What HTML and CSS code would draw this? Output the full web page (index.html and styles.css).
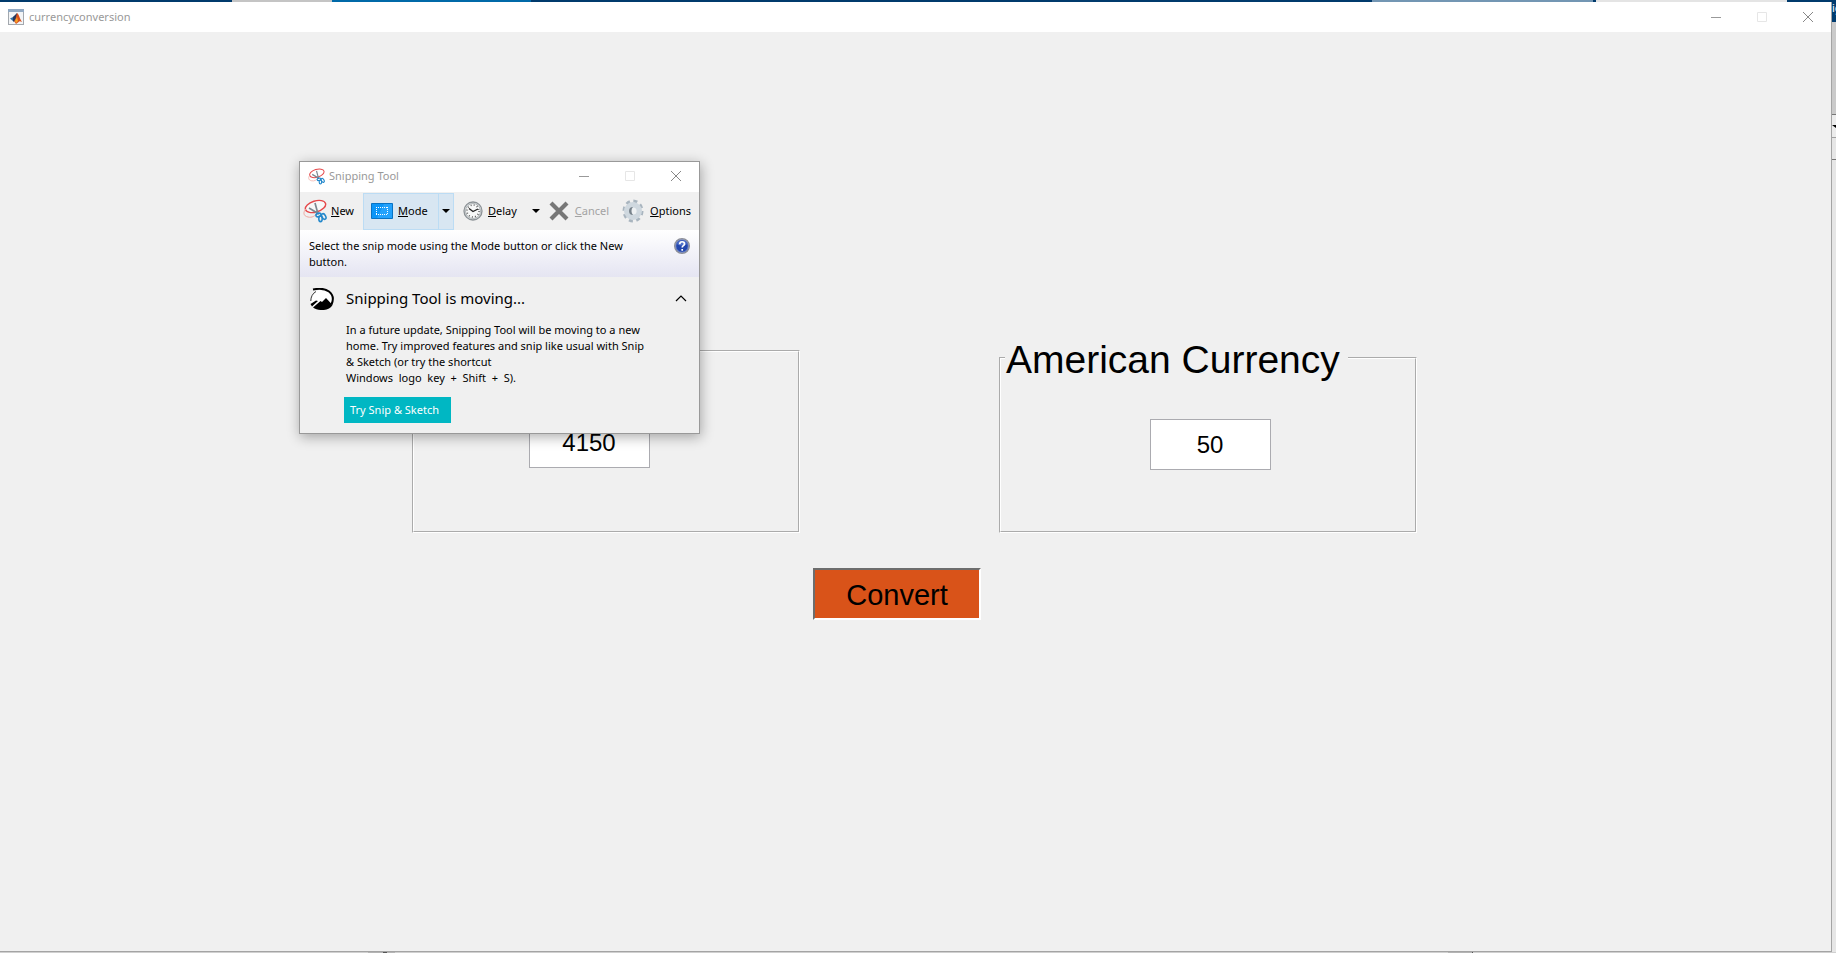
FILE: index.html
```html
<!DOCTYPE html>
<html lang="en">
<head>
<meta charset="utf-8">
<title>currencyconversion</title>
<link rel="stylesheet" href="styles.css">
</head>
<body>
<div class="desktop">
  <div class="strip-top">
    <i class="seg navy" style="flex:232"></i>
    <i class="seg grey" style="flex:100"></i>
    <i class="seg blue" style="flex:199"></i>
    <i class="seg navy" style="flex:841"></i>
    <i class="seg steel" style="flex:221"></i>
    <i class="seg navy" style="flex:3"></i>
    <i class="seg light" style="flex:191"></i>
    <i class="seg navy" style="flex:49"></i>
  </div>

  <main class="figure">
    <header class="titlebar">
      <svg class="app-icon" viewBox="0 0 16 16" aria-hidden="true">
        <rect x=".5" y=".5" width="15" height="15" fill="#f2f4f6" stroke="#a3a8ae"/>
        <path d="M0 0h16v3H0z" fill="#91a9c3"/>
        <path d="M2 9.500l4-2 2 2-2.500 3z" fill="#2f6fa5"/>
        <path d="M5 8l4-4v4l-3 5-1-1z" fill="#25375c"/>
        <path d="M9 4c2 1 2 4 5 9-3-2-3 0-6 2l-2-3c2-1 2-5 3-8z" fill="#d8501c"/>
        <path d="M9 8l1 4-2 2-1-2z" fill="#f5a326"/>
      </svg>
      <h1 class="title">currencyconversion</h1>
      <div class="window-buttons">
        <button class="win-btn" aria-label="Minimize"><svg viewBox="0 0 10 10"><path d="M0 5.5h10" stroke="#999"/></svg></button>
        <button class="win-btn" aria-label="Maximize" disabled><svg viewBox="0 0 10 10"><path d="M.5.5h9v9h-9z" stroke="#e6e6e6"/></svg></button>
        <button class="win-btn" aria-label="Close"><svg viewBox="0 0 10 10"><path d="M0 0l10 10M10 0L0 10" stroke="#888"/></svg></button>
      </div>
    </header>

    <form class="converter">
      <div class="panels">
        <fieldset class="panel panel-source" aria-label="Source currency">
          <input class="amount" aria-label="Source amount" value="4150">
        </fieldset>
        <fieldset class="panel panel-target">
          <legend>American Currency</legend>
          <input class="amount" aria-label="American amount" value="50">
        </fieldset>
      </div>
      <div class="actions">
        <button type="button" class="convert">Convert</button>
      </div>
    </form>
  </main>

  <div class="strip-right">
    <span class="peek-title">ig</span>
    <i class="peek-pane"></i>
    <i class="peek-combo"><svg viewBox="0 0 4 4"><path d="M0 0h4v3z" fill="#000"/></svg></i>
    <i class="peek-row"></i>
  </div>

  <div class="strip-bottom">
    <i style="flex:368"></i><i class="thumb" style="flex:15"></i><i class="mark" style="flex:4"></i><i class="thumb" style="flex:8"></i><i style="flex:1053"></i><i class="thumb" style="flex:24"></i><i class="mark" style="flex:1"></i><i style="flex:363"></i>
  </div>
</div>

<section class="snip" aria-label="Snipping Tool">
  <svg width="0" height="0" class="defs" aria-hidden="true">
    <symbol id="scissors" viewBox="0 0 24 24">
      <ellipse cx="12.500" cy="7.500" rx="10.500" ry="5.500" transform="rotate(-17 12.500 7.500)" fill="#fff" fill-opacity=".5" stroke="#e5484a" stroke-width="1.400"/>
      <path d="M3 10c-3 3-3 7 2 8 4 1 7-1 9-4" fill="none" stroke="#efa9a2" stroke-width="1"/>
      <path d="M12 4l3 11M6 9l10 6" stroke="#7d8790" stroke-width="1.700"/>
      <ellipse cx="15.500" cy="16" rx="2.600" ry="1.700" transform="rotate(-15 15.500 16)" fill="none" stroke="#2488cb" stroke-width="1.600"/>
      <ellipse cx="17.500" cy="19.800" rx="1.700" ry="2.800" fill="none" stroke="#2488cb" stroke-width="1.600"/>
      <ellipse cx="20.800" cy="17.500" rx="1.800" ry="3" transform="rotate(-30 20.800 17.500)" fill="none" stroke="#2488cb" stroke-width="1.600"/>
    </symbol>
  </svg>
  <header class="titlebar snip-titlebar">
    <svg class="snip-icon"><use href="#scissors"/></svg>
    <h2 class="title">Snipping Tool</h2>
    <div class="window-buttons">
      <button class="win-btn" aria-label="Minimize"><svg viewBox="0 0 10 10"><path d="M0 5.5h10" stroke="#999"/></svg></button>
      <button class="win-btn" aria-label="Maximize" disabled><svg viewBox="0 0 10 10"><path d="M.5.5h9v9h-9z" stroke="#e6e6e6"/></svg></button>
      <button class="win-btn" aria-label="Close"><svg viewBox="0 0 10 10"><path d="M0 0l10 10M10 0L0 10" stroke="#888"/></svg></button>
    </div>
  </header>

  <nav class="toolbar">
    <button class="tool tool-new"><svg class="icon"><use href="#scissors"/></svg><span><u>N</u>ew</span></button>
    <div class="split">
      <button class="tool tool-mode">
        <svg class="icon-mode" viewBox="0 0 22 16"><path d="M.5.5h21v15H.5z" fill="#0c96f8" stroke="#0873c4"/><path d="M13 1h8v14H6z" fill="#35aaff" opacity=".6"/><path d="M5 4.500h12M5 11.500h12M5.500 4v8M16.500 4v8" fill="none" stroke="#fff" stroke-dasharray="1 1"/></svg>
        <span><u>M</u>ode</span>
      </button>
      <button class="arrow" aria-label="Mode options"><svg viewBox="0 0 8 4"><path d="M0 0h8L4 4z"/></svg></button>
    </div>
    <button class="tool tool-delay">
      <svg class="icon-clock" viewBox="0 0 20 20"><circle cx="10" cy="10" r="9" fill="#dfe2e4" stroke="#8c9296" stroke-width="1.300"/><circle cx="10" cy="10" r="7.500" fill="#f7f8f8" stroke="#a2a8ab" stroke-width=".8"/><circle cx="10" cy="10" r="6" fill="none" stroke="#555" stroke-width="1.600" stroke-dasharray=".9 2.242"/><path d="M6 7.500l4 3 5-2.500" fill="none" stroke="#222" stroke-width="1.300"/></svg>
      <span><u>D</u>elay</span>
    </button>
    <button class="arrow arrow-delay" aria-label="Delay options"><svg viewBox="0 0 8 4"><path d="M0 0h8L4 4z"/></svg></button>
    <button class="tool tool-cancel" disabled>
      <svg class="icon-x" viewBox="0 0 20 20"><path d="M2 2l16 16M18 2L2 18" stroke="#777" stroke-width="4.200"/></svg>
      <span><u>C</u>ancel</span>
    </button>
    <button class="tool tool-options">
      <svg class="icon-gear" viewBox="0 0 22 24"><ellipse cx="11" cy="12" rx="9" ry="10" fill="none" stroke="#a9b5bf" stroke-width="3" stroke-dasharray="4 3.480"/><circle cx="11" cy="12" r="6" fill="none" stroke="#cfd8df" stroke-width="6"/><circle cx="11" cy="12" r="3.600" fill="#eef1f3"/><path d="M11 8a4 4 0 000 8 6 6 0 010-8z" fill="#77828b"/></svg>
      <span><u>O</u>ptions</span>
    </button>
  </nav>

  <div class="hint">
    <p>Select the snip mode using the Mode button or click the New button.</p>
    <button class="help" aria-label="Help"><svg viewBox="0 0 16 16"><circle cx="8" cy="8" r="7.300" fill="#2447ad" stroke="#8d8f98" stroke-width="1.400"/><circle cx="8" cy="8" r="6.300" fill="none" stroke="#c9d0ea" stroke-width=".5"/><path d="M3 6a5.500 5.500 0 0110 0c-3 2-7 2-10 0z" fill="#6f8fe0" opacity=".6"/><path d="M5.700 6.200c0-3.200 4.800-3.200 4.800-.3C10.500 7.700 8.200 7.600 8.200 9.500M8.200 11v1.700" fill="none" stroke="#fff" stroke-width="1.700"/></svg></button>
  </div>

  <div class="notice">
    <svg class="sketch-icon" viewBox="0 0 24 22" aria-hidden="true">
      <path d="M5 4C8 1.500 14 .5 19 4c4 3 5 8 3 12l-4 4H5l-4-5C0 10 1.500 6.500 5 4z" fill="#fff"/>
      <path d="M3 1.500C9 .3 15 .5 19 3.500c4.500 3.500 4.500 8.500 2.500 13" fill="none" stroke="#000" stroke-width="2"/>
      <path d="M6 3.500C2.500 5.500.8 9 .8 13" fill="none" stroke="#000" stroke-width=".8"/>
      <path d="M.5 16L6 12.500l2 .5-6 5.500zM3 19.500l7.500-6.500 1.500 1 4-4 6.500 7C19.500 23 9 23.500 3 19.500z"/>
    </svg>
    <div class="notice-body">
      <div class="notice-head">
        <h3>Snipping Tool is moving...</h3>
        <button class="collapse" aria-label="Collapse"><svg viewBox="0 0 12 8"><path d="M1 7l5-5 5 5" fill="none" stroke="#000" stroke-width="1.200"/></svg></button>
      </div>
      <p>In a future update, Snipping Tool will be moving to a new home. Try improved features and snip like usual with Snip &amp;&nbsp;Sketch (or try the shortcut<br><span class="keys">Windows&nbsp; logo&nbsp; key&nbsp; +&nbsp; Shift&nbsp; +&nbsp; S).</span></p>
      <button class="try">Try Snip &amp; Sketch</button>
    </div>
  </div>
</section>
</body>
</html>
```
FILE: styles.css
```css
* { box-sizing: border-box; }
body {
  margin: 0;
  font: 11px/16px "Noto Sans", "Open Sans", sans-serif;
  color: #000;
}
button { margin: 0; padding: 0; border: 0; background: none; font: inherit; color: inherit; }
h1, h2, h3, p { margin: 0; font-weight: 400; }
svg { display: block; }

.desktop {
  display: grid;
  grid-template-columns: minmax(0, 1fr) 4px;
  grid-template-rows: 2px minmax(0, 1fr) 1px;
  height: 100vh;
  overflow: hidden;
  background: #d8d8d8;
}
.strip-top { grid-column: 1 / -1; display: flex; }
.navy { background: #003a6c; }
.grey { background: #c4c4c4; }
.blue { background: #0069a8; }
.steel { background: #7396b3; }
.light { background: #e4e4e4; }
.strip-bottom { grid-column: 1 / -1; display: flex; background: #d0d0d0; }
.thumb { background: #b4b4b4; }
.mark { background: #555; }

.strip-right { display: flex; flex-direction: column; overflow: hidden; background: #e6e6e6; }
.peek-title { height: 20px; background: #003c70; color: #fff; line-height: 12px; }
.peek-pane { height: 93px; background: #cacaca; border-bottom: 1px solid #777; }
.peek-combo { height: 23px; padding-top: 10px; border-bottom: 1px solid #a0a0a0; background: #ececec; }
.peek-combo svg { width: 4px; height: 4px; }
.peek-row { height: 22px; border-bottom: 1px solid #777; }

.figure {
  display: flex;
  flex-direction: column;
  background: #f0f0f0;
  border: solid #a4a4a4;
  border-width: 0 1px 1px 0;
}
.titlebar { display: flex; align-items: center; height: 30px; background: #fff; color: #999; }
.figure > .titlebar { padding-left: 8px; gap: 5px; }
.app-icon { width: 16px; height: 16px; }
.title { font-size: 11px; line-height: 16px; }
.window-buttons { display: flex; margin-left: auto; }
.win-btn { display: grid; place-items: center; width: 46px; height: 28px; }
.win-btn svg { width: 10px; height: 10px; fill: none; }

.converter { flex: 1; padding-top: 303px; font-family: "Liberation Sans", Arial, sans-serif; }
.panels {
  display: grid;
  grid-template-columns: 412fr 388fr 199fr 418fr 414fr;
  align-items: end;
}
.panel { min-width: 0; margin: 0; border: 2px groove #fff; }
.panel-source { grid-column: 2; height: 183px; padding: 65px 34px 0 0; }
.panel-target { grid-column: 4; height: 198px; padding: 38px 0 0 4px; }
.panel legend { margin-left: 0; padding: 4px 8px 0 1px; font-size: 39px; line-height: 42px; }
.amount {
  display: block;
  width: 121px;
  height: 51px;
  margin: 0 auto;
  border: 1px solid #ababb0;
  background: #fff;
  font: 24px/28px "Liberation Sans", Arial, sans-serif;
  text-align: center;
  color: #000;
}
.actions { display: grid; grid-template-columns: 813fr 168fr 850fr; padding-top: 35px; }
.convert {
  grid-column: 2;
  height: 52px;
  padding-top: 2px;
  border: 2px solid;
  border-color: #6d6d6d #fff #fff #6d6d6d;
  background: #d95319;
  font-size: 29px;
  line-height: 32px;
}

.snip {
  position: absolute;
  left: 299px;
  top: 161px;
  width: 401px;
  border: 1px solid #999;
  background: #f0f0f0;
  box-shadow: 1px 3px 12px rgba(0, 0, 0, .32);
}
.defs { position: absolute; }
.snip-titlebar { height: 30px; padding: 0 0 2px 8px; gap: 4px; }
.snip-icon { width: 17px; height: 17px; }
.toolbar { display: flex; align-items: center; height: 38px; }
.tool { display: flex; align-items: center; gap: 4px; white-space: nowrap; }
.tool-new { width: 63px; padding-left: 3px; }
.icon { width: 24px; height: 24px; }
.split { display: flex; height: 37px; width: 91px; border: 1px solid #bcdcf4; background: #d8e6f2; }
.tool-mode { flex: 1; padding-left: 7px; gap: 5px; }
.icon-mode { width: 22px; height: 16px; }
.arrow { display: grid; place-items: center; width: 15px; }
.split .arrow { border-left: 1px solid #bcdcf4; }
.arrow svg { width: 8px; height: 4px; }
.tool-delay { padding-left: 9px; gap: 5px; }
.icon-clock { width: 20px; height: 20px; }
.arrow-delay { margin-left: auto; }
.tool-cancel { padding-left: 5px; gap: 6px; color: #a3a3a3; }
.icon-x { width: 20px; height: 20px; }
.tool-options { padding: 0 8px 0 13px; gap: 6px; }
.icon-gear { width: 22px; height: 24px; }

.hint {
  display: flex;
  justify-content: space-between;
  align-items: flex-start;
  height: 47px;
  padding: 8px 9px 0;
  background: linear-gradient(#fff, #e5e5f2);
}
.hint p { width: 340px; }
.help svg { width: 16px; height: 16px; }

.notice { display: flex; gap: 12px; padding: 9px 12px 10px 10px; }
.sketch-icon { flex: none; width: 24px; height: 22px; margin-top: 2px; }
.notice-body { flex: 1; min-width: 0; }
.notice-head { display: flex; justify-content: space-between; align-items: center; height: 24px; margin-bottom: 12px; }
.notice h3 { font-size: 15px; line-height: 24px; }
.collapse svg { width: 12px; height: 8px; }
.notice p { width: 308px; }
.try { display: block; height: 26px; margin: 11px 0 0 -2px; padding: 0 12px 0 6px; background: #00b7c3; color: #fff; }
```
